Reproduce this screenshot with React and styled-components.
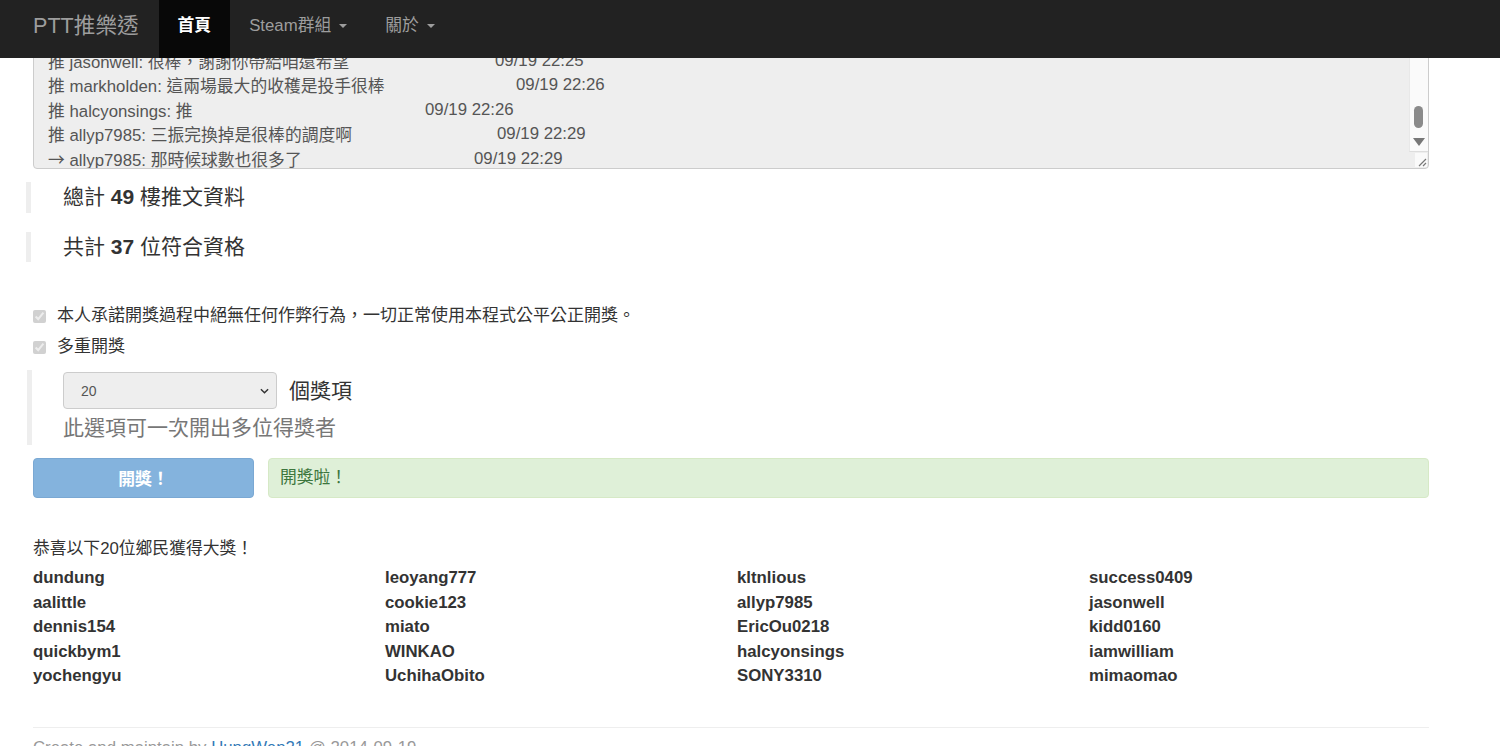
import React from "react";
import styled, { createGlobalStyle } from "styled-components";

const GlobalStyle = createGlobalStyle`
  html, body {
    margin: 0;
    padding: 0;
    background: #fff;
    overflow: hidden;
  }
  body {
    font-family: "Liberation Sans", "Noto Sans CJK TC", Arial, sans-serif;
    font-size: 16.8px;
    line-height: 24px;
    color: #333;
  }
`;

const pushes = [
  { tag: "推", text: "jasonwell: 很棒，謝謝你帶給咱還希望", time: "09/19 22:25", at: 447 },
  { tag: "推", text: "markholden: 這兩場最大的收穫是投手很棒", time: "09/19 22:26", at: 468 },
  { tag: "推", text: "halcyonsings: 推", time: "09/19 22:26", at: 377 },
  { tag: "推", text: "allyp7985: 三振完換掉是很棒的調度啊", time: "09/19 22:29", at: 449 },
  { tag: "→", text: "allyp7985: 那時候球數也很多了", time: "09/19 22:29", at: 426 },
];

const winners = [
  ["dundung", "leoyang777", "kltnlious", "success0409"],
  ["aalittle", "cookie123", "allyp7985", "jasonwell"],
  ["dennis154", "miato", "EricOu0218", "kidd0160"],
  ["quickbym1", "WINKAO", "halcyonsings", "iamwilliam"],
  ["yochengyu", "UchihaObito", "SONY3310", "mimaomao"],
];

export default function App() {
  return (
    <>
      <GlobalStyle />
      <Navbar>
        <Brand>PTT推樂透</Brand>
        <NavItem active>首頁</NavItem>
        <NavItem>
          Steam群組 <Caret />
        </NavItem>
        <NavItem>
          關於 <Caret />
        </NavItem>
      </Navbar>

      <Container>
        <PushBox>
          <PushList>
            {pushes.map((p, i) => (
              <PushRow key={i}>
                <PushText $w={p.at}>
                  <Tag>{p.tag}</Tag> {p.text}
                </PushText>
                <span>{p.time}</span>
              </PushRow>
            ))}
          </PushList>
          <ScrollTrack>
            <Thumb />
            <DownArrow />
          </ScrollTrack>
          <Grip>
            <svg width="10" height="10" viewBox="0 0 10 10">
              <path d="M9 2 L2 9 M9 6 L6 9" stroke="#777" strokeWidth="1.2" />
            </svg>
          </Grip>
        </PushBox>

        <Quote $top={13}>
          總計 <b>49</b> 樓推文資料
        </Quote>
        <Quote $top={19}>
          共計 <b>37</b> 位符合資格
        </Quote>

        <CheckRow $top={42}>
          <input type="checkbox" checked disabled readOnly />
          本人承諾開獎過程中絕無任何作弊行為，一切正常使用本程式公平公正開獎。
        </CheckRow>
        <CheckRow $top={7}>
          <input type="checkbox" checked disabled readOnly />
          多重開獎
        </CheckRow>

        <OptionQuote>
          <SelectLine>
            <SelectWrap>
              <Select value="20" disabled onChange={() => {}}>
                <option value="20">20</option>
              </Select>
              <Chevron viewBox="0 0 10 6">
                <path d="M1 1 L5 5 L9 1" fill="none" stroke="#333" strokeWidth="1.6" />
              </Chevron>
            </SelectWrap>
            個獎項
          </SelectLine>
          <Help>此選項可一次開出多位得獎者</Help>
        </OptionQuote>

        <ActionRow>
          <DrawButton disabled>開獎！</DrawButton>
          <Alert>開獎啦！</Alert>
        </ActionRow>

        <Congrats>恭喜以下20位鄉民獲得大獎！</Congrats>
        <WinnerGrid>
          {winners.flat().map((n) => (
            <Winner key={n}>{n}</Winner>
          ))}
        </WinnerGrid>

        <Rule />
        <Footer>
          Create and maintain by <a href="#">HungWen21</a> @ 2014-09-19
        </Footer>
      </Container>
    </>
  );
}

const Navbar = styled.nav`
  position: fixed;
  top: 0;
  left: 0;
  right: 0;
  height: 58px;
  background: #222;
  display: flex;
  align-items: stretch;
  padding-left: 33px;
  z-index: 10;
`;

const Brand = styled.div`
  color: #9d9d9d;
  font-size: 21.6px;
  display: flex;
  align-items: center;
  margin-right: 20px;
  padding-bottom: 6px;
`;

const NavItem = styled.div`
  display: flex;
  align-items: center;
  gap: 8px;
  padding: 0 19px 6px;
  font-size: 16.8px;
  color: ${(p) => (p.active ? "#fff" : "#9d9d9d")};
  background: ${(p) => (p.active ? "#080808" : "transparent")};
  font-weight: ${(p) => (p.active ? "bold" : "normal")};
`;

const Caret = styled.span`
  display: inline-block;
  width: 0;
  height: 0;
  border-left: 4px solid transparent;
  border-right: 4px solid transparent;
  border-top: 4px solid #9d9d9d;
`;

const Container = styled.main`
  width: 1396px;
  margin-left: 33px;
`;

const PushBox = styled.div`
  position: relative;
  margin-top: 10px;
  height: 157px;
  border: 1px solid #ccc;
  border-radius: 4px;
  background: #eee;
  overflow: hidden;
  color: #555;
`;

const PushList = styled.div`
  position: absolute;
  left: 14px;
  right: 20px;
  bottom: -3px;
  display: flex;
  flex-direction: column;
`;

const PushRow = styled.div`
  display: flex;
  height: 24.4px;
  line-height: 24.4px;
  white-space: nowrap;
`;

const PushText = styled.span`
  width: ${(p) => p.$w}px;
  flex-shrink: 0;
`;

const Tag = styled.span`
  font-family: "Noto Sans CJK TC", sans-serif;
`;

const ScrollTrack = styled.div`
  position: absolute;
  top: 0;
  right: 0;
  width: 18px;
  height: 140px;
  background: #fafafa;
  border-left: 1px solid #e8e8e8;
  border-bottom: 1px solid #ddd;
`;

const Thumb = styled.div`
  position: absolute;
  left: 4px;
  top: 95px;
  width: 9px;
  height: 22px;
  border-radius: 5px;
  background: #8a8a8a;
`;

const DownArrow = styled.div`
  position: absolute;
  left: 3px;
  top: 127px;
  width: 0;
  height: 0;
  border-left: 6px solid transparent;
  border-right: 6px solid transparent;
  border-top: 8px solid #777;
`;

const Grip = styled.div`
  position: absolute;
  right: 1px;
  bottom: 1px;
  width: 12px;
  height: 14px;
  background: #fafafa;
  display: flex;
  align-items: flex-end;
  justify-content: flex-end;
`;

const Quote = styled.blockquote`
  margin: ${(p) => p.$top}px 0 0 -7px;
  padding: 0 0 0 32px;
  border-left: 5px solid #eee;
  font-size: 21px;
  line-height: 30.5px;
  height: 30.5px;
  b {
    font-weight: bold;
  }
`;

const CheckRow = styled.label`
  display: flex;
  align-items: center;
  gap: 11px;
  margin-top: ${(p) => p.$top}px;
  height: 24px;
  font-size: 17px;
  input {
    margin: 0;
    width: 13px;
    height: 13px;
  }
`;

const OptionQuote = styled.div`
  margin: 11px 0 0 -6px;
  padding: 2px 0 2px 31px;
  border-left: 5px solid #eee;
`;

const SelectLine = styled.div`
  display: flex;
  align-items: center;
  gap: 12px;
  font-size: 21px;
  color: #333;
`;

const SelectWrap = styled.div`
  position: relative;
  width: 214px;
  height: 37px;
`;

const Select = styled.select`
  appearance: none;
  width: 100%;
  height: 100%;
  border: 1px solid #ccc;
  border-radius: 4px;
  background: #eee;
  color: #555;
  padding-left: 17px;
  font-family: "Liberation Sans", Arial, sans-serif;
  font-size: 14px;
  opacity: 1;
`;

const Chevron = styled.svg`
  position: absolute;
  right: 8px;
  top: 16px;
  width: 9px;
  height: 6px;
`;

const Help = styled.div`
  margin-top: 4px;
  font-size: 21px;
  line-height: 30px;
  color: #777;
`;

const ActionRow = styled.div`
  display: flex;
  gap: 14px;
  margin-top: 13px;
  height: 40px;
`;

const DrawButton = styled.button`
  width: 221px;
  border: 1px solid #7aa8d3;
  border-radius: 4px;
  background: #84b3dd;
  color: #fff;
  font-family: "Liberation Sans", "Noto Sans CJK TC", sans-serif;
  font-size: 16.8px;
  font-weight: bold;
`;

const Alert = styled.div`
  flex: 1;
  display: flex;
  align-items: center;
  padding-left: 11px;
  background: #dff0d8;
  border: 1px solid #d6e9c6;
  border-radius: 4px;
  color: #3c763d;
  font-size: 16.8px;
`;

const Congrats = styled.div`
  margin-top: 39px;
  height: 24px;
`;

const WinnerGrid = styled.div`
  display: grid;
  grid-template-columns: repeat(4, 352px);
  margin-top: 5px;
`;

const Winner = styled.div`
  font-weight: bold;
  height: 24.5px;
  line-height: 24.5px;
`;

const Rule = styled.hr`
  margin: 38px 0 0;
  border: 0;
  border-top: 1px solid #eee;
`;

const Footer = styled.div`
  margin-top: 8px;
  color: #999;
  a {
    color: #337ab7;
    text-decoration: none;
  }
`;
